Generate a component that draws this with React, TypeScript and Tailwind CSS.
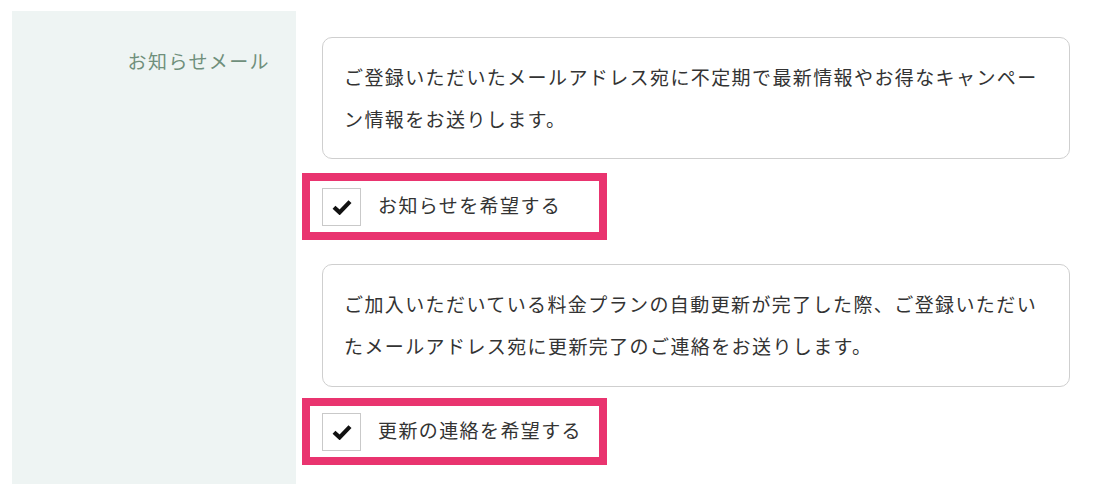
import React from 'react';

const CheckOption = ({ label }: { label: string }) => (
  <label className="flex h-[67px] w-[305px] items-center border-[8px] border-[#e9346f] bg-white pl-[12px]">
    <span className="flex h-[38px] w-[39px] shrink-0 items-center justify-center border border-[#c9c9c9] bg-white">
      <svg width="20" height="16" viewBox="0 0 20 16">
        <path d="M2 8.2 L7.6 13.4 L18 2.6" fill="none" stroke="#111" strokeWidth="4.2" />
      </svg>
    </span>
    <span className="ml-[17px] pb-[3px] text-[19px] leading-[28px] tracking-[1.4px] text-[#333]">{label}</span>
  </label>
);

export default function App() {
  return (
    <div className="h-[498px] w-[1102px] bg-white pl-[12px] pt-[11px] font-['Noto_Sans_CJK_JP','Noto_Sans',sans-serif]">
      <div className="flex">
        {/* label cell */}
        <div className="h-[473px] w-[284px] shrink-0 bg-[#eef4f3] pr-[26px] pt-[36px] text-right">
          <span className="text-[19px] leading-[28px] tracking-[1.4px] text-[#6f8f7b]">お知らせメール</span>
        </div>

        {/* content cell */}
        <div className="flex flex-1 flex-col pl-[6px] pr-[32px]">
          <div className="ml-[20px] mt-[26px] rounded-[10px] border border-[#cfcfcf] px-[21px] py-[18px] text-[19px] leading-[42px] tracking-[1.4px] text-[#333]">
            ご登録いただいたメールアドレス宛に不定期で最新情報やお得なキャンペー
            <br />
            ン情報をお送りします。
          </div>

          <div className="mt-[14px]">
            <CheckOption label="お知らせを希望する" />
          </div>

          <div className="ml-[20px] mt-[24px] rounded-[10px] border border-[#cfcfcf] px-[21px] pb-[19px] pt-[18px] text-[19px] leading-[42px] tracking-[1.4px] text-[#333]">
            ご加入いただいている料金プランの自動更新が完了した際、ご登録いただい
            <br />
            たメールアドレス宛に更新完了のご連絡をお送りします。
          </div>

          <div className="mt-[11px]">
            <CheckOption label="更新の連絡を希望する" />
          </div>
        </div>
      </div>
    </div>
  );
}
